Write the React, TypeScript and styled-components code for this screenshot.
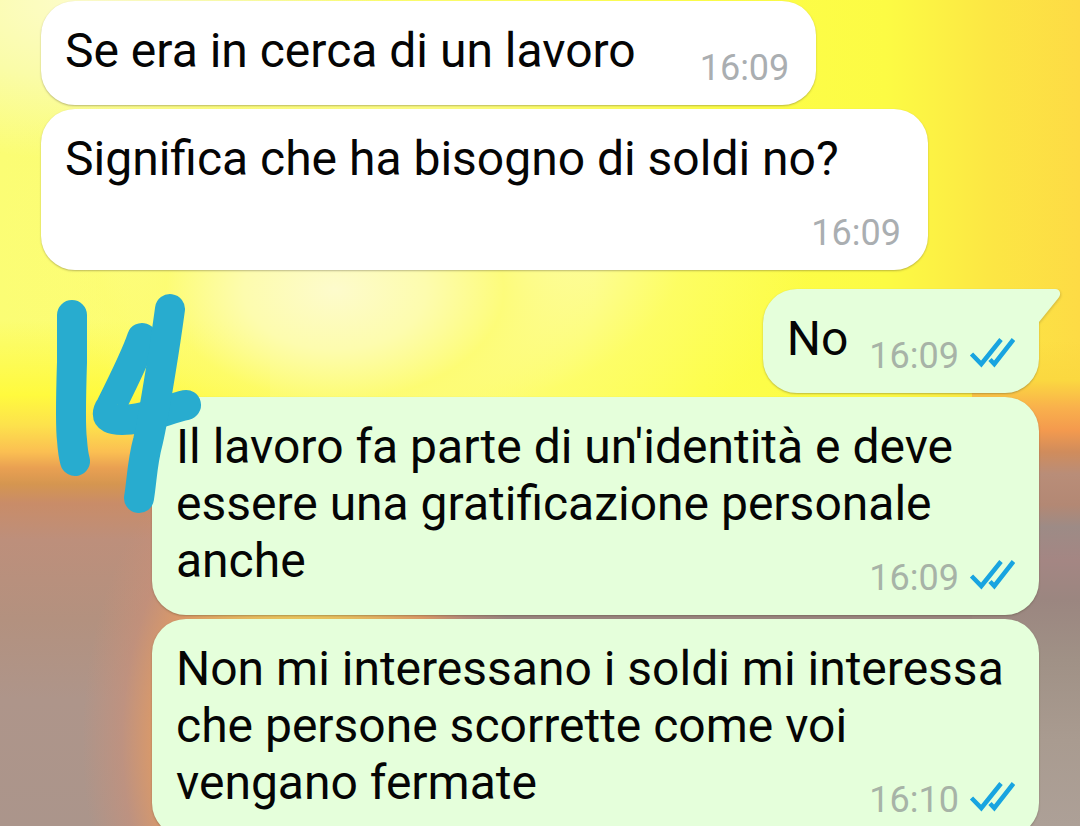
import React from "react";
import styled, { createGlobalStyle, css } from "styled-components";

const GlobalStyle = createGlobalStyle`
  *, *::before, *::after { box-sizing: border-box; }
  body {
    margin: 0;
    font-family: Roboto, "Liberation Sans", sans-serif;
    color: #050505;
  }
`;

const Chat = styled.main`
  position: relative;
  height: 100vh;
  overflow: hidden;
  padding: 1px 41px 0;
  background:
    radial-gradient(ellipse 260px 170px at 31% 290px, #fdfbcc 0%, #fdfcae 35%, rgba(253, 252, 110, 0.8) 65%, rgba(253, 253, 90, 0) 100%),
    radial-gradient(ellipse 220px 330px at 28% 740px, #f5e35a 0%, #eed05c 30%, #dc9a68 66%, rgba(207, 143, 118, 0.5) 82%, rgba(207, 143, 118, 0) 100%),
    linear-gradient(to bottom, rgba(255, 250, 60, 0) 320px, #fffa3e 395px, #fde24c 425px, #fbbf52 452px, #e9a052 468px, #d59650 484px, #c98c68 503px, #bd8f7b 540px, #b3917f 620px, #ae958a 700px, #ab958b 826px) left top / 25% 100% no-repeat,
    linear-gradient(to bottom, rgba(253, 225, 58, 0) 340px, #fbd840 380px, #f9b04c 408px, #f49a4e 430px, #d08c5c 452px, #b98d78 474px, #b38874 505px, #9d8b86 527px, #a48683 560px, #9b8680 600px, #a09186 660px, #a99b90 740px, #ada097 826px) right top / 10% 100% no-repeat,
    linear-gradient(to bottom, rgba(155, 134, 128, 0) 440px, #9b8680 520px),
    radial-gradient(ellipse 420px 240px at 36% 250px, #fdfbcf 0%, #fdfcae 35%, rgba(253, 253, 120, 0.5) 70%, rgba(253, 253, 90, 0) 100%),
    radial-gradient(ellipse 300px 160px at 8% 0, #fdfccb 0%, #fafca8 50%, rgba(252, 253, 130, 0) 100%),
    linear-gradient(to right, #fbfd74 0%, #fdfe6c 40%, #fdfe4a 65%, #fcfb44 82%, #fce644 92%, #fddb45 100%);
`;

const Thread = styled.ol`
  display: flex;
  flex-direction: column;
  gap: 4px;
  margin: 0;
  padding: 0;
  list-style: none;
`;

const Bubble = styled.li<{ $sent?: boolean; $first?: boolean }>`
  position: relative;
  display: flow-root;
  flex: none;
  align-self: ${(p) => (p.$sent ? "flex-end" : "flex-start")};
  max-width: min(887px, 100%);
  margin-top: ${(p) => (p.$first ? "15px" : "0")};
  padding: 21px 24px 16px;
  border-radius: 34px;
  background: ${(p) => (p.$sent ? "#e5ffdb" : "#ffffff")};
  box-shadow: 0 1px 2px rgba(70, 60, 40, 0.35);
  font-size: 48px;
  line-height: 57px;
  ${(p) => p.$first && css`border-top-right-radius: 0;`}
`;

const Meta = styled.span<{ $sent?: boolean }>`
  float: right;
  display: flex;
  align-items: center;
  gap: 10px;
  padding-top: 25px;
  margin-left: ${(p) => (p.$sent ? "21px" : "64px")};
  padding-right: ${(p) => (p.$sent ? "0" : "3px")};
  color: ${(p) => (p.$sent ? "#a7b3a7" : "#aaaeb1")};
  font-size: 36px;
  line-height: 42px;
`;

const Ticks = styled.svg`
  display: block;
  width: 46px;
  height: 32px;
  margin-bottom: 8px;
`;

const Tail = styled.svg`
  position: absolute;
  top: 0;
  left: 100%;
  width: 24px;
  height: 36px;
  overflow: visible;
  filter: drop-shadow(1px 1px 1px rgba(70, 60, 40, 0.2));
  clip-path: inset(-2px -4px -4px 0);
`;

const Marker = styled.svg`
  position: absolute;
  top: 290px;
  left: 50px;
  width: 160px;
  height: 230px;
  pointer-events: none;
`;

interface Message {
  text: string;
  time: string;
  sent?: boolean;
  first?: boolean;
}

const messages: Message[] = [
  { text: "Se era in cerca di un lavoro", time: "16:09" },
  { text: "Significa che ha bisogno di soldi no?", time: "16:09" },
  { text: "No", time: "16:09", sent: true, first: true },
  {
    text: "Il lavoro fa parte di un'identità e deve essere una gratificazione personale anche",
    time: "16:09",
    sent: true,
  },
  {
    text: "Non mi interessano i soldi mi interessa che persone scorrette come voi vengano fermate",
    time: "16:10",
    sent: true,
  },
];

const ReadTicks = () => (
  <Ticks viewBox="0 0 46 32" fill="none" stroke="#18a4e0" strokeWidth="4.5" aria-hidden="true">
    <path d="M2.500 18L12.300 28L32 3.500" />
    <path d="M21 23.500L25.300 28L44.500 3.500" />
  </Ticks>
);

const MessageBubble = ({ text, time, sent, first }: Message) => (
  <Bubble $sent={sent} $first={first}>
    {text}
    <Meta $sent={sent}>
      <time>{time}</time>
      {sent && <ReadTicks />}
    </Meta>
    {first && (
      <Tail viewBox="0 0 24 36" aria-hidden="true">
        <path d="M-1 0H16C21 0 23 5 19 9.500L0 33H-1Z" fill="#e5ffdb" />
      </Tail>
    )}
  </Bubble>
);

const HandDrawnNumber = () => (
  <Marker
    viewBox="50 290 160 230"
    fill="none"
    stroke="#28accf"
    strokeWidth="30"
    strokeLinecap="round"
    strokeLinejoin="round"
    aria-hidden="true"
  >
    <path d="M72 315V362Q70 425 72 440Q73 454 75 461" />
    <path d="M142 338C137 353 126 376 111 406C102 419 113 421 130 419.500C152 417 168 409 186 405" />
    <path d="M170 309C167 331 165 345 161 369C156 400 152 424 148 441C142 463 142 480 139 498" />
  </Marker>
);

export default function App() {
  return (
    <>
      <GlobalStyle />
      <Chat>
        <Thread>
          {messages.map((message) => (
            <MessageBubble key={message.text} {...message} />
          ))}
        </Thread>
        <HandDrawnNumber />
      </Chat>
    </>
  );
}
